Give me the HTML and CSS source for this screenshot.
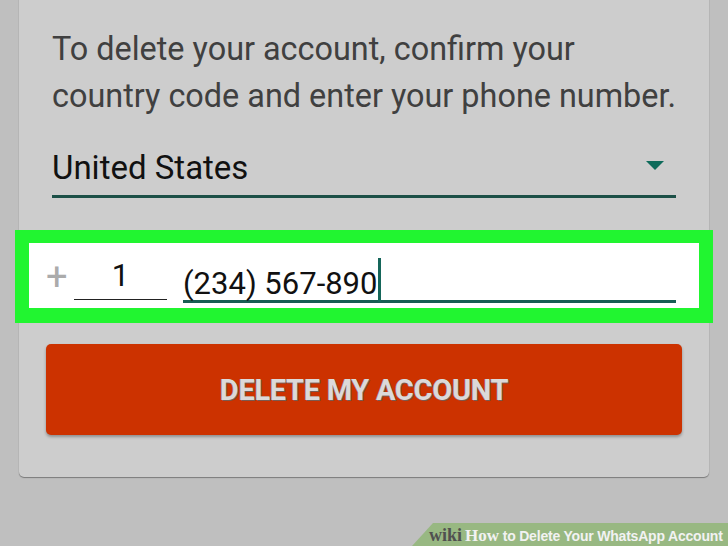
FILE: index.html
```html
<!DOCTYPE html>
<html>
<head>
<meta charset="utf-8">
<link rel="stylesheet" href="styles.css">
</head>
<body>
<div class="page">
  <div class="card">
    <p class="intro">To delete your account, confirm your<br>country code and enter your phone number.</p>
    <div class="select">
      <span class="country">United States</span>
      <svg class="caret" width="20" height="10" viewBox="0 0 20 10"><polygon points="1,0 19,0 10,9" fill="#0e6b5b"/></svg>
    </div>
    <div class="highlight">
      <div class="phone-row">
        <span class="plus">+</span>
        <span class="code">1</span>
        <span class="number">(234) 567-890<span class="cursor"></span></span>
      </div>
    </div>
    <button class="delete"><span class="delete-label">DELETE MY ACCOUNT</span></button>
  </div>
  <div class="banner"><span class="wiki">wiki</span><span class="how">How</span><span class="title"> to Delete Your WhatsApp Account</span></div>
</div>
</body>
</html>
```
FILE: styles.css
```css
html, body {
  margin: 0;
  padding: 0;
}
body {
  width: 728px;
  height: 546px;
  overflow: hidden;
  background: #bfbfbf;
  font-family: Roboto, "Noto Sans", sans-serif;
}
.page {
  position: relative;
  width: 728px;
  height: 546px;
  overflow: hidden;
}
.card {
  margin: -10px 0 0 19px;
  width: 690px;
  box-sizing: border-box;
  padding: 36px 33px 42px 33px;
  background: #cdcdcd;
  border-radius: 0 0 5px 5px;
  box-shadow: 0 1px 1px rgba(0,0,0,0.35), 0 0 1px rgba(0,0,0,0.15);
}
.intro {
  margin: 0 -20px 0 0;
  font-size: 32.4px;
  line-height: 47px;
  color: #404040;
  white-space: nowrap;
}
.select {
  margin-top: 28px;
  display: flex;
  align-items: center;
  justify-content: space-between;
  height: 40px;
  padding-bottom: 7px;
  border-bottom: 3px solid #1c5047;
}
.country {
  font-size: 33px;
  line-height: 40px;
  color: #111;
}
.caret {
  margin-right: 11px;
  margin-top: -4px;
}
.highlight {
  margin: 32px -37px 0 -37px;
  border: 14px solid #21f530;
  border-top-width: 13px;
  border-bottom-width: 15px;
  background: #ffffff;
  height: 65px;
}
.phone-row {
  display: flex;
  align-items: flex-start;
  padding: 15px 23px 0 17px;
}
.plus {
  width: 20px;
  font-size: 38px;
  line-height: 38px;
  color: #ababab;
  font-weight: 400;
  margin-right: 8px;
}
.code {
  width: 93px;
  text-align: center;
  font-size: 31px;
  line-height: 36px;
  height: 36px;
  color: #111;
  padding-bottom: 5px;
  border-bottom: 1.5px solid #222;
}
.number {
  flex: 1;
  margin-left: 16px;
  font-size: 31px;
  line-height: 36px;
  height: 36px;
  color: #111;
  padding-bottom: 6px;
  border-bottom: 3px solid #185e54;
  white-space: nowrap;
}
.cursor {
  display: inline-block;
  width: 3px;
  height: 44px;
  background: #15665a;
  vertical-align: -8px;
  margin-left: 1px;
}
.delete {
  display: flex;
  align-items: center;
  justify-content: center;
  margin: 21px -6px 0 -6px;
  width: calc(100% + 12px);
  height: 91px;
  border: none;
  border-radius: 5px;
  background: #cc3200;
  box-shadow: 0 2px 3px rgba(0,0,0,0.3);
  padding: 0;
}
.delete-label {
  display: inline-block;
  font-family: Roboto, sans-serif;
  font-weight: 700;
  font-size: 29px;
  color: #dcd9d9;
  letter-spacing: -0.3px;
  text-shadow: 1px 1px 0 #7a5a50, -0.5px -0.5px 0 #8a7068;
}
.banner {
  position: absolute;
  right: 0;
  bottom: 0;
  width: 316px;
  height: 23px;
  background: #98b882;
  clip-path: polygon(21px 0, 100% 0, 100% 100%, 0 100%);
  box-sizing: border-box;
  padding-left: 17px;
  white-space: nowrap;
  line-height: 24px;
}
.wiki {
  font-family: "Liberation Serif", serif;
  font-weight: 700;
  font-size: 18px;
  color: #505050;
}
.how {
  font-family: "Liberation Serif", serif;
  font-weight: 700;
  font-size: 17px;
  color: #f2f2f2;
  margin-left: 3px;
}
.title {
  font-family: "Liberation Sans", Arial, sans-serif;
  font-weight: 700;
  font-size: 14px;
  letter-spacing: -0.2px;
  color: #f2f2f2;
}
```
